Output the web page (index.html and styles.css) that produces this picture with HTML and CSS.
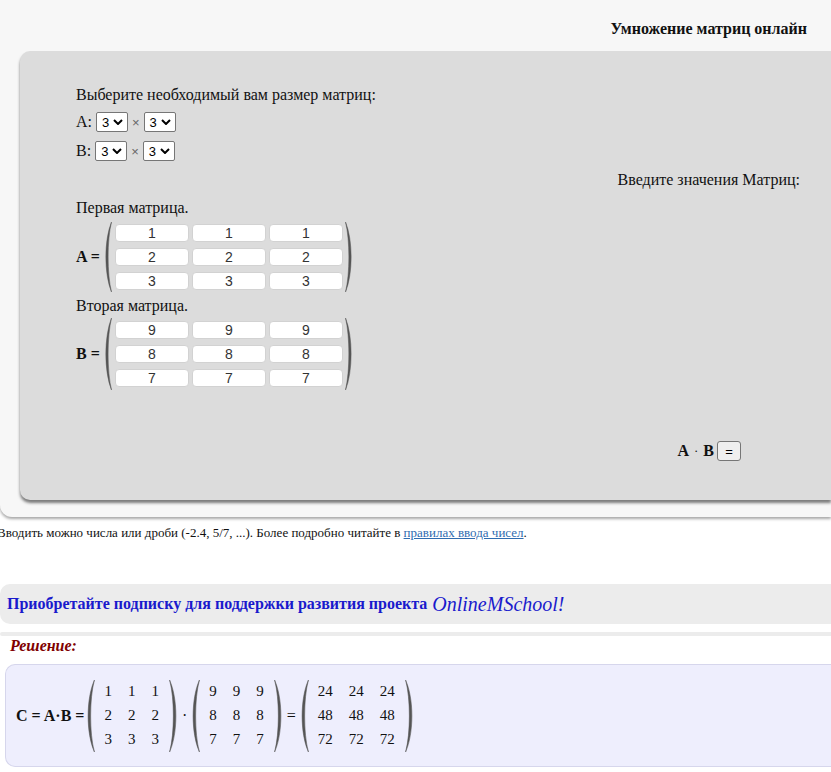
FILE: index.html
```html
<!DOCTYPE html>
<html lang="ru">
<head>
<meta charset="utf-8">
<title>Умножение матриц онлайн</title>
<link rel="stylesheet" href="styles.css">
</head>
<body>
<div class="top">
  <h1 class="title">Умножение матриц онлайн</h1>
  <div class="panel">
    <p class="intro">Выберите необходимый вам размер матриц:</p>
    <div class="size-row"><span>A:</span>
      <span class="sel">3<svg class="chev" viewBox="0 0 10 6" width="10" height="6"><path d="M1 1 L5 5 L9 1" /></svg></span>
      <span class="times">×</span>
      <span class="sel">3<svg class="chev" viewBox="0 0 10 6" width="10" height="6"><path d="M1 1 L5 5 L9 1" /></svg></span>
    </div>
    <div class="size-row size-row-b"><span>B:</span>
      <span class="sel">3<svg class="chev" viewBox="0 0 10 6" width="10" height="6"><path d="M1 1 L5 5 L9 1" /></svg></span>
      <span class="times">×</span>
      <span class="sel">3<svg class="chev" viewBox="0 0 10 6" width="10" height="6"><path d="M1 1 L5 5 L9 1" /></svg></span>
    </div>
    <p class="enter">Введите значения Матриц:</p>
    <p class="mlabel">Первая матрица.</p>
    <div class="mrow">
      <b class="mname">A =</b>
      <svg class="paren" viewBox="0 0 8 70" width="8" height="70"><path d="M7.5 0 C0 18 0 52 7.5 70 C3 52 3 18 7.5 0 Z"/></svg>
      <div class="cells">
        <input value="1"><input value="1"><input value="1">
        <input value="2"><input value="2"><input value="2">
        <input value="3"><input value="3"><input value="3">
      </div>
      <svg class="paren r" viewBox="0 0 8 70" width="8" height="70"><path d="M7.5 0 C0 18 0 52 7.5 70 C3 52 3 18 7.5 0 Z"/></svg>
    </div>
    <p class="mlabel mlabel-b">Вторая матрица.</p>
    <div class="mrow mrow-b">
      <b class="mname">B =</b>
      <svg class="paren" viewBox="0 0 8 70" width="8" height="72" preserveAspectRatio="none"><path d="M7.5 0 C0 18 0 52 7.5 70 C3 52 3 18 7.5 0 Z"/></svg>
      <div class="cells">
        <input value="9"><input value="9"><input value="9">
        <input value="8"><input value="8"><input value="8">
        <input value="7"><input value="7"><input value="7">
      </div>
      <svg class="paren r" viewBox="0 0 8 70" width="8" height="72" preserveAspectRatio="none"><path d="M7.5 0 C0 18 0 52 7.5 70 C3 52 3 18 7.5 0 Z"/></svg>
    </div>
    <div class="calc"><b>A</b><span class="dot">·</span><b>B</b><button class="eq">=</button></div>
  </div>
</div>

<p class="note">Вводить можно числа или дроби (-2.4, 5/7, ...). Более подробно читайте в <a href="#">правилах ввода чисел</a>.</p>

<div class="promo"><b>Приобретайте подписку для поддержки развития проекта</b> <i class="brand">OnlineMSchool!</i></div>

<div class="sep"></div>
<p class="sol-title">Решение:</p>

<div class="solution">
  <b class="sname">C = A·B =</b>
  <svg class="paren big" viewBox="0 0 8 70" width="9" height="72" preserveAspectRatio="none"><path d="M7.5 0 C0 18 0 52 7.5 70 C3 52 3 18 7.5 0 Z"/></svg>
  <div class="res">
    <span>1</span><span>1</span><span>1</span>
    <span>2</span><span>2</span><span>2</span>
    <span>3</span><span>3</span><span>3</span>
  </div>
  <svg class="paren big r" viewBox="0 0 8 70" width="9" height="72" preserveAspectRatio="none"><path d="M7.5 0 C0 18 0 52 7.5 70 C3 52 3 18 7.5 0 Z"/></svg>
  <span class="op">·</span>
  <svg class="paren big" viewBox="0 0 8 70" width="9" height="72" preserveAspectRatio="none"><path d="M7.5 0 C0 18 0 52 7.5 70 C3 52 3 18 7.5 0 Z"/></svg>
  <div class="res">
    <span>9</span><span>9</span><span>9</span>
    <span>8</span><span>8</span><span>8</span>
    <span>7</span><span>7</span><span>7</span>
  </div>
  <svg class="paren big r" viewBox="0 0 8 70" width="9" height="72" preserveAspectRatio="none"><path d="M7.5 0 C0 18 0 52 7.5 70 C3 52 3 18 7.5 0 Z"/></svg>
  <span class="op">=</span>
  <svg class="paren big" viewBox="0 0 8 70" width="9" height="72" preserveAspectRatio="none"><path d="M7.5 0 C0 18 0 52 7.5 70 C3 52 3 18 7.5 0 Z"/></svg>
  <div class="res">
    <span>24</span><span>24</span><span>24</span>
    <span>48</span><span>48</span><span>48</span>
    <span>72</span><span>72</span><span>72</span>
  </div>
  <svg class="paren big r" viewBox="0 0 8 70" width="9" height="72" preserveAspectRatio="none"><path d="M7.5 0 C0 18 0 52 7.5 70 C3 52 3 18 7.5 0 Z"/></svg>
</div>
</body>
</html>
```

FILE: styles.css
```css
html, body {
  margin: 0;
  padding: 0;
  overflow: hidden;
}
body {
  background: #ffffff;
  font-family: "Liberation Serif", "Times New Roman", serif;
  font-size: 16px;
  color: #111;
}

.top {
  background: #f7f7f7;
  padding-bottom: 17px;
  border-bottom-left-radius: 12px;
  box-shadow: 0 2px 3px rgba(0, 0, 0, 0.35);
}
.title {
  margin: 0 0 13px;
  padding: 20px 24px 0 0;
  font-size: 16px;
  line-height: 18px;
  font-weight: bold;
  text-align: right;
}

.panel {
  margin-left: 20px;
  background: #dcdcdc;
  border-radius: 10px 0 0 10px;
  box-shadow: 0 3px 3px rgba(0, 0, 0, 0.5);
  padding: 35px 31px 39px 56px;
}
.panel p {
  margin: 0;
  line-height: 18px;
}

.size-row {
  margin-top: 8px;
  height: 20px;
  display: flex;
  align-items: center;
  gap: 4px;
}
.size-row-b {
  margin-top: 9px;
}
.sel {
  box-sizing: border-box;
  width: 32px;
  height: 20px;
  background: #fff;
  border: 1px solid #767676;
  border-radius: 2px;
  display: flex;
  align-items: center;
  justify-content: space-between;
  padding: 0 4px 0 5px;
  font-family: "Liberation Sans", Arial, sans-serif;
  font-size: 13px;
  color: #000;
}
.chev {
  fill: none;
  stroke: #000;
  stroke-width: 2;
}
.times {
  color: #666;
  font-size: 13px;
  font-family: "Liberation Sans", Arial, sans-serif;
}

.panel .enter {
  margin-top: 10px;
  text-align: right;
}
.panel .mlabel {
  margin-top: 10px;
}
.panel .mlabel-b {
  margin-top: 4px;
}

.mrow {
  margin-top: 4px;
  height: 72px;
  display: flex;
  align-items: center;
}
.mrow-b {
  margin-top: 3px;
}
.mname {
  width: 28px;
  flex: none;
}
.paren {
  flex: none;
  fill: #555;
  stroke: #555;
  stroke-width: 0.5;
}
.paren.r {
  transform: scaleX(-1);
}
.cells {
  display: grid;
  grid-template-columns: repeat(3, 74px);
  column-gap: 3px;
  row-gap: 6px;
  padding: 0 2px 0 3px;
}
.cells input {
  box-sizing: border-box;
  width: 74px;
  height: 18px;
  margin: 0;
  padding: 0;
  border: 1px solid #d2d2d2;
  border-radius: 4px;
  background: #fff;
  text-align: center;
  font-family: "Liberation Sans", Arial, sans-serif;
  font-size: 14px;
  color: #333;
  outline: none;
}

.calc {
  margin-top: 51px;
  height: 20px;
  display: flex;
  align-items: center;
  justify-content: flex-end;
  padding-right: 59px;
  font-size: 16px;
}
.calc .dot {
  margin: 0 5px;
  font-size: 13px;
}
.eq {
  margin-left: 3px;
  width: 24px;
  height: 20px;
  padding: 0;
  background: #efefef;
  border: 1px solid #767676;
  border-radius: 3px;
  font-family: "Liberation Sans", Arial, sans-serif;
  font-size: 13px;
  color: #000;
}

.note {
  margin: 8px 0 0 -3px;
  font-size: 13px;
  line-height: 15px;
}
.note a {
  color: #2f6cb0;
}

.promo {
  margin-top: 44px;
  height: 40px;
  display: flex;
  align-items: center;
  gap: 5px;
  padding-left: 7px;
  background: #ececec;
  border-radius: 10px 0 0 10px;
  color: #1a1acc;
  font-size: 16px;
}
.brand {
  font-size: 20px;
}

.sep {
  margin-top: 8px;
  height: 4px;
  background: #ececec;
  border-radius: 4px 0 0 4px;
}
.sol-title {
  margin: 1px 0 0 10px;
  line-height: 18px;
  color: #800000;
  font-weight: bold;
  font-style: italic;
}

.solution {
  margin: 9px 0 0 5px;
  height: 103px;
  box-sizing: border-box;
  padding: 0 0 0 10px;
  background: #eeeefd;
  border: 1px solid #d6d6ec;
  border-right: none;
  border-radius: 10px 0 0 10px;
  display: flex;
  align-items: center;
}
.sname {
  margin-right: 2px;
}
.res {
  display: grid;
  grid-template-columns: repeat(3, auto);
  grid-auto-rows: 24px;
  align-items: center;
  padding: 0 2px 0 1px;
  font-size: 15px;
}
.res span {
  padding: 0 8px;
  text-align: center;
}
.op {
  margin: 0 4px;
}
```
